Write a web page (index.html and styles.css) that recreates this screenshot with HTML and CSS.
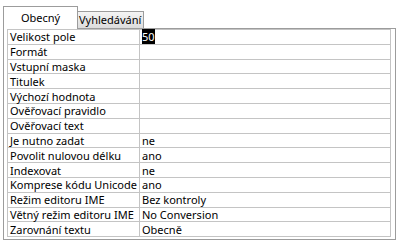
FILE: index.html
```html
<!DOCTYPE html>
<html lang="cs">
<head>
    <meta charset="UTF-8">
    <title>Vlastnosti pole</title>
    <link rel="stylesheet" href="styles.css">
</head>
<body>
    <div class="box">
        <div class="tabs">
            <span class="tab current">Obecný</span>
            <span class="tab">Vyhledávání</span>
        </div>
        <div class="panel">
            <table class="props">
                <tr><td class="name">Velikost pole</td><td><span class="sel">50</span></td></tr>
                <tr><td class="name">Formát</td><td></td></tr>
                <tr><td class="name">Vstupní maska</td><td></td></tr>
                <tr><td class="name">Titulek</td><td></td></tr>
                <tr><td class="name">Výchozí hodnota</td><td></td></tr>
                <tr><td class="name">Ověřovací pravidlo</td><td></td></tr>
                <tr><td class="name">Ověřovací text</td><td></td></tr>
                <tr><td class="name">Je nutno zadat</td><td>ne</td></tr>
                <tr><td class="name">Povolit nulovou délku</td><td>ano</td></tr>
                <tr><td class="name">Indexovat</td><td>ne</td></tr>
                <tr><td class="name">Komprese kódu Unicode</td><td>ano</td></tr>
                <tr><td class="name">Režim editoru IME</td><td>Bez kontroly</td></tr>
                <tr><td class="name">Větný režim editoru IME</td><td>No Conversion</td></tr>
                <tr><td class="name">Zarovnání textu</td><td>Obecně</td></tr>
            </table>
        </div>
    </div>
</body>
</html>
```

FILE: styles.css
```css
* {
    margin: 0;
    padding: 0;
}

body {
    background: #fff;
    font-family: "Noto Sans", "Open Sans", sans-serif;
    font-size: 11px;
    color: #000;
}

.box {
    width: 393px;
    padding: 6px 0 0 3px;
}

.tabs {
    display: flex;
    align-items: flex-end;
    height: 22px;
}

.tab {
    display: block;
    height: 16px;
    line-height: 16px;
    padding: 0 2px 0 1px;
    border: 1px solid #9c9c9c;
    border-bottom: none;
    border-left: none;
    background: linear-gradient(#f4f4f4, #dcdcdc);
}

/* 当前选中的标签盖住面板的上边框 */
.tab.current {
    width: 73px;
    height: 22px;
    line-height: 22px;
    padding: 0;
    text-align: center;
    border-left: 1px solid #9c9c9c;
    background: #fff;
    position: relative;
    top: 1px;
}

.panel {
    border: 1px solid #9c9c9c;
    padding: 0 4px 2px 3px;
}

.props {
    width: 100%;
    border-collapse: collapse;
    border: 1px solid #c4c4c4;
}

.props td {
    height: 13.8px;
    line-height: 13px;
    padding: 0 2px;
    border: 1px solid #c4c4c4;
    white-space: nowrap;
}

.props .name {
    width: 127px;
}

.sel {
    background: #000;
    color: #fff;
}
```
